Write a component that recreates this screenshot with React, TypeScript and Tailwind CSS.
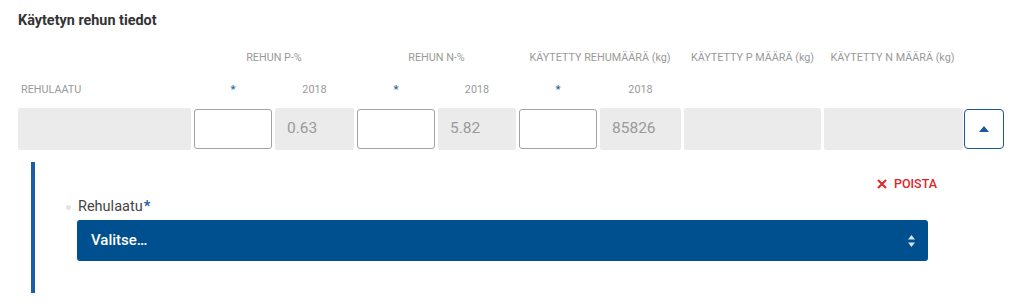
import React from "react";

const font = { fontFamily: "Roboto, 'Liberation Sans', sans-serif" };

function Input() {
  return <div className="h-[40px] my-[1px] bg-white border border-[#a3a3a3] rounded-[3px]" />;
}

function Gray({ value }: { value?: string }) {
  return (
    <div className="h-[42px] bg-[#ebebeb] rounded-[2px] flex items-center pl-[12px] text-[15.5px] text-[#9a9a9a]">
      {value}
    </div>
  );
}

function Star() {
  return <div className="flex justify-center text-[11px] text-[#2c6aa8] font-bold">*</div>;
}

function Year() {
  return <div className="flex justify-center text-[10.8px] text-[#9a9a9a]">2018</div>;
}

export default function App() {
  const cols =
    "grid grid-cols-[173px_78px_79px_78px_78px_78px_81px_137px_137px_40px] gap-x-[3px]";
  return (
    <div className="w-[1024px] h-[302px] bg-white overflow-hidden pl-[18px]" style={font}>
      <div className="h-[42px] flex items-center text-[14.4px] font-bold text-[#333333] leading-[16px]">
        Käytetyn rehun tiedot
      </div>

      <div className={`${cols} h-[32px] items-center text-[10.8px] text-[#9a9a9a] leading-[12px]`}>
        <div />
        <div className="col-span-2 text-center">REHUN P-%</div>
        <div className="col-span-2 text-center">REHUN N-%</div>
        <div className="col-span-2 text-center">KÄYTETTY REHUMÄÄRÄ (kg)</div>
        <div className="text-center">KÄYTETTY P MÄÄRÄ (kg)</div>
        <div className="text-center">KÄYTETTY N MÄÄRÄ (kg)</div>
        <div />
      </div>

      <div className={`${cols} h-[32px] items-center text-[10.8px] text-[#9a9a9a] leading-[12px]`}>
        <div className="pl-[3px]">REHULAATU</div>
        <Star />
        <Year />
        <Star />
        <Year />
        <Star />
        <Year />
        <div />
        <div />
        <div />
      </div>

      <div className={`${cols} mt-[2px] items-start`}>
        <Gray />
        <Input />
        <Gray value="0.63" />
        <Input />
        <Gray value="5.82" />
        <Input />
        <Gray value="85826" />
        <Gray />
        <div className="mr-[-2px]"><Gray /></div>
        <div className="h-[40px] my-[1px] border-[1.5px] border-[#1b56a0] rounded-[4px] bg-white flex items-center justify-center">
          <svg width="10" height="6" viewBox="0 0 10 6">
            <path d="M5 0 L10 6 L0 6 Z" fill="#1b56a0" />
          </svg>
        </div>
      </div>

      <div className="mt-[12px] ml-[13px] flex">
        <div className="w-[4px] bg-[#1c5ea6]" />
        <div className="pl-[42px] w-[902px] pt-[15px] pb-[32px]">
          <div className="h-[14px] flex items-center justify-end gap-[7px] text-[#e0262b]">
            <svg width="10" height="10" viewBox="0 0 10 10">
              <path d="M1 1 L9 9 M9 1 L1 9" stroke="#e0262b" strokeWidth="2" />
            </svg>
            <span className="text-[12.5px] font-medium leading-[14px]">POISTA</span>
          </div>
          <div className="mt-[8px] h-[16px] flex items-center text-[14.5px] text-[#444444] leading-[16px]">
            <span className="w-[5px] h-[5px] rounded-full bg-[#e3e3e3] ml-[-11px] mr-[7px]" />
            <span>Rehulaatu</span>
            <span className="text-[#1c5ea6] font-bold ml-[1px]">*</span>
          </div>
          <div className="mt-[5px] w-[851px] h-[41px] bg-[#004f8f] rounded-[3px] flex items-center justify-between pl-[14px] pr-[13px]">
            <span className="text-[15px] font-medium text-white">Valitse…</span>
            <svg width="7" height="12" viewBox="0 0 7 12">
              <path d="M3.5 0 L7 4.5 L0 4.5 Z" fill="#d6e4f2" />
              <path d="M0 7.5 L7 7.5 L3.5 12 Z" fill="#d6e4f2" />
            </svg>
          </div>
        </div>
      </div>
    </div>
  );
}
